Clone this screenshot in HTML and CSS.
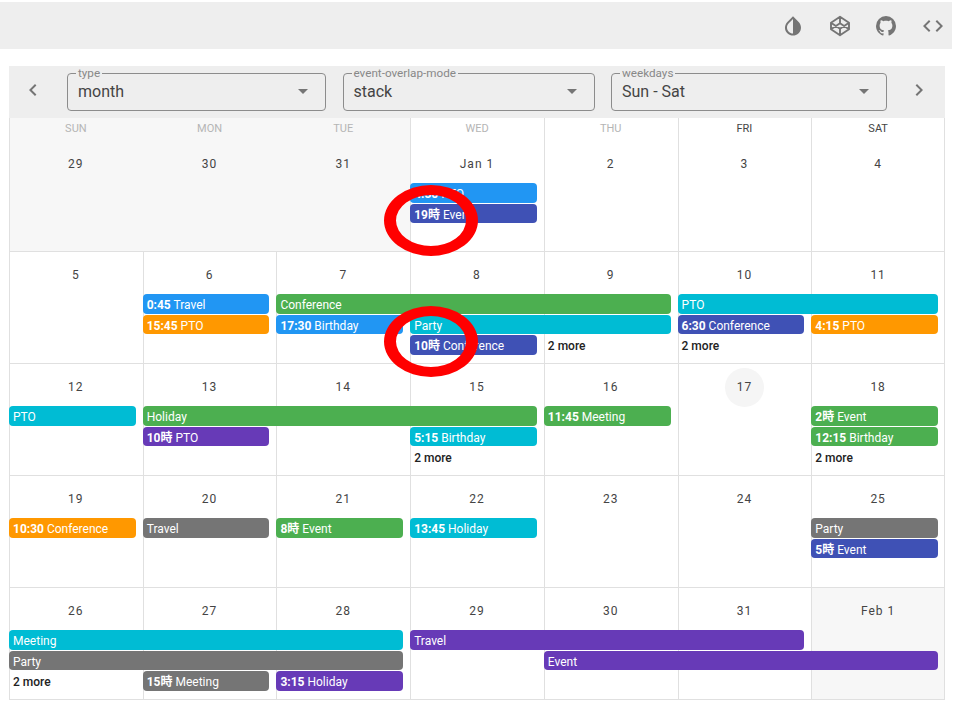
FILE: index.html
```html
<!DOCTYPE html>
<html lang="en">
<head>
<meta charset="utf-8">
<title>Calendar</title>
<link rel="stylesheet" href="styles.css">
</head>
<body>
<header class="appbar">
  <svg class="icon" viewBox="0 0 24 24"><path fill-rule="evenodd" d="M17.66 7.93L12 2.27 6.34 7.93c-3.12 3.12-3.12 8.19 0 11.31C7.9 20.8 9.95 21.58 12 21.58c2.05 0 4.1-.78 5.66-2.34 3.12-3.12 3.12-8.19 0-11.31zM12 19.59c-1.6 0-3.11-.62-4.24-1.76C6.62 16.69 6 15.19 6 13.59s.62-3.11 1.76-4.24L12 5.1v14.49z"/></svg>
  <svg class="icon stroked" viewBox="0 0 24 24"><path d="M12 2.8L21 8.8V15.2L12 21.2L3 15.2V8.8ZM3 8.8L12 14.8L21 8.8M3 15.2L12 9.2L21 15.2M12 2.8V9.2M12 14.8V21.2"/></svg>
  <svg class="icon" viewBox="0 0 24 24"><path d="M12,2A10,10 0 0,0 2,12C2,16.42 4.87,20.17 8.84,21.5C9.34,21.58 9.5,21.27 9.5,21C9.5,20.77 9.5,20.14 9.5,19.31C6.73,19.91 6.14,17.97 6.14,17.97C5.68,16.81 5.03,16.5 5.03,16.5C4.12,15.88 5.1,15.9 5.1,15.9C6.1,15.97 6.63,16.93 6.63,16.93C7.5,18.45 8.97,18 9.54,17.76C9.63,17.11 9.89,16.67 10.17,16.42C7.95,16.17 5.62,15.31 5.62,11.5C5.62,10.39 6,9.5 6.65,8.79C6.55,8.54 6.2,7.5 6.75,6.15C6.75,6.15 7.59,5.88 9.5,7.17C10.29,6.95 11.15,6.84 12,6.84C12.85,6.84 13.71,6.95 14.5,7.17C16.41,5.88 17.25,6.15 17.25,6.15C17.8,7.5 17.45,8.54 17.35,8.79C18,9.5 18.38,10.39 18.38,11.5C18.38,15.32 16.04,16.16 13.81,16.41C14.17,16.72 14.5,17.33 14.5,18.26C14.5,19.6 14.5,20.68 14.5,21C14.5,21.27 14.66,21.59 15.17,21.5C19.14,20.16 22,16.42 22,12A10,10 0 0,0 12,2Z"/></svg>
  <svg class="icon" viewBox="0 0 24 24"><path d="M14.6,16.6L19.2,12L14.6,7.4L16,6L22,12L16,18L14.6,16.6M9.4,16.6L4.8,12L9.4,7.4L8,6L2,12L8,18L9.4,16.6Z"/></svg>
</header>

<main class="main">
  <div class="toolbar">
    <div class="nav nav-prev"><svg class="icon" viewBox="0 0 24 24"><path d="M15.41,16.58L10.83,12L15.41,7.41L14,6L8,12L14,18L15.41,16.58Z"/></svg></div>
    <fieldset class="field field-type"><legend>type</legend><span>month</span><svg class="icon" viewBox="0 0 24 24"><path d="M7,10L12,15L17,10H7Z"/></svg></fieldset>
    <fieldset class="field field-mode"><legend>event-overlap-mode</legend><span>stack</span><svg class="icon" viewBox="0 0 24 24"><path d="M7,10L12,15L17,10H7Z"/></svg></fieldset>
    <fieldset class="field field-days"><legend>weekdays</legend><span>Sun - Sat</span><svg class="icon" viewBox="0 0 24 24"><path d="M7,10L12,15L17,10H7Z"/></svg></fieldset>
    <div class="nav nav-next"><svg class="icon" viewBox="0 0 24 24"><path d="M8.59,16.58L13.17,12L8.59,7.41L10,6L16,12L10,18L8.59,16.58Z"/></svg></div>
  </div>

  <section class="week week-first">
    <div class="day c1 outside"><div class="head">SUN</div><div class="num">29</div></div>
    <div class="day c2 outside"><div class="head">MON</div><div class="num">30</div></div>
    <div class="day c3 outside"><div class="head">TUE</div><div class="num">31</div></div>
    <div class="day c4"><div class="head">WED</div><div class="num">Jan 1</div></div>
    <div class="day c5"><div class="head">THU</div><div class="num">2</div></div>
    <div class="day c6"><div class="head dark">FRI</div><div class="num">3</div></div>
    <div class="day c7"><div class="head dark">SAT</div><div class="num">4</div></div>
    <div class="ev blue c4 r1"><b>4:30</b> PTO</div>
    <div class="ev indigo c4 r2"><b>19時</b> Event</div>
  </section>

  <section class="week">
    <div class="day c1"><div class="num">5</div></div>
    <div class="day c2"><div class="num">6</div></div>
    <div class="day c3"><div class="num">7</div></div>
    <div class="day c4"><div class="num">8</div></div>
    <div class="day c5"><div class="num">9</div></div>
    <div class="day c6"><div class="num">10</div></div>
    <div class="day c7"><div class="num">11</div></div>
    <div class="ev blue c2 r1"><b>0:45</b> Travel</div>
    <div class="ev green c3 r1 s3">Conference</div>
    <div class="ev cyan c6 r1 s2">PTO</div>
    <div class="ev orange c2 r2"><b>15:45</b> PTO</div>
    <div class="ev blue c3 r2"><b>17:30</b> Birthday</div>
    <div class="ev cyan c4 r2 s2">Party</div>
    <div class="ev indigo c6 r2"><b>6:30</b> Conference</div>
    <div class="ev orange c7 r2"><b>4:15</b> PTO</div>
    <div class="ev indigo c4 r3"><b>10時</b> Conference</div>
    <div class="more c5 r3">2 more</div>
    <div class="more c6 r3">2 more</div>
  </section>

  <section class="week">
    <div class="day c1"><div class="num">12</div></div>
    <div class="day c2"><div class="num">13</div></div>
    <div class="day c3"><div class="num">14</div></div>
    <div class="day c4"><div class="num">15</div></div>
    <div class="day c5"><div class="num">16</div></div>
    <div class="day c6"><div class="num today">17</div></div>
    <div class="day c7"><div class="num">18</div></div>
    <div class="ev cyan c1 r1">PTO</div>
    <div class="ev green c2 r1 s3">Holiday</div>
    <div class="ev green c5 r1"><b>11:45</b> Meeting</div>
    <div class="ev green c7 r1"><b>2時</b> Event</div>
    <div class="ev purple c2 r2"><b>10時</b> PTO</div>
    <div class="ev cyan c4 r2"><b>5:15</b> Birthday</div>
    <div class="ev green c7 r2"><b>12:15</b> Birthday</div>
    <div class="more c4 r3">2 more</div>
    <div class="more c7 r3">2 more</div>
  </section>

  <section class="week">
    <div class="day c1"><div class="num">19</div></div>
    <div class="day c2"><div class="num">20</div></div>
    <div class="day c3"><div class="num">21</div></div>
    <div class="day c4"><div class="num">22</div></div>
    <div class="day c5"><div class="num">23</div></div>
    <div class="day c6"><div class="num">24</div></div>
    <div class="day c7"><div class="num">25</div></div>
    <div class="ev orange c1 r1"><b>10:30</b> Conference</div>
    <div class="ev grey c2 r1">Travel</div>
    <div class="ev green c3 r1"><b>8時</b> Event</div>
    <div class="ev cyan c4 r1"><b>13:45</b> Holiday</div>
    <div class="ev grey c7 r1">Party</div>
    <div class="ev indigo c7 r2"><b>5時</b> Event</div>
  </section>

  <section class="week week-last">
    <div class="day c1"><div class="num">26</div></div>
    <div class="day c2"><div class="num">27</div></div>
    <div class="day c3"><div class="num">28</div></div>
    <div class="day c4"><div class="num">29</div></div>
    <div class="day c5"><div class="num">30</div></div>
    <div class="day c6"><div class="num">31</div></div>
    <div class="day c7 outside"><div class="num">Feb 1</div></div>
    <div class="ev cyan c1 r1 s3">Meeting</div>
    <div class="ev purple c4 r1 s3">Travel</div>
    <div class="ev grey c1 r2 s3">Party</div>
    <div class="ev purple c5 r2 s3">Event</div>
    <div class="more c1 r3">2 more</div>
    <div class="ev grey c2 r3"><b>15時</b> Meeting</div>
    <div class="ev purple c3 r3"><b>3:15</b> Holiday</div>
  </section>

  <div class="ring ring-a"></div>
  <div class="ring ring-b"></div>
</main>
</body>
</html>
```

FILE: styles.css
```css
* { box-sizing: border-box; }

body {
  margin: 0;
  background: #fff;
  font-family: Roboto, "Noto Sans CJK JP", sans-serif;
  color: #333;
}

.icon {
  width: 24px;
  height: 24px;
  fill: #757575;
  flex: none;
}

.stroked {
  fill: none;
  stroke: #757575;
  stroke-width: 1.9;
  stroke-linejoin: round;
}

.appbar {
  display: flex;
  align-items: center;
  justify-content: flex-end;
  gap: 22.6px;
  width: 952px;
  height: 47px;
  margin-top: 2px;
  padding-right: 7px;
  background: #eee;
}

.main {
  position: relative;
  width: 936px;
  margin: 17px 0 0 9px;
}

.toolbar {
  display: flex;
  gap: 16.5px;
  height: 52px;
  padding-top: 1px;
  background: #eee;
}

.nav {
  width: 58px;
  height: 46px;
  display: flex;
  align-items: center;
}

.nav-prev {
  margin-right: -16.5px;
  padding-left: 12px;
}

.nav-next {
  margin-left: -16.5px;
  justify-content: flex-end;
  padding-right: 14px;
}

.field {
  display: flex;
  align-items: center;
  justify-content: space-between;
  height: 44px;
  margin: 0;
  padding: 0 10px 7px 10px;
  border: 1px solid #8c8c8c;
  border-radius: 4px;
  min-width: 0;
  font-size: 16px;
  color: #444;
}

.field legend {
  padding: 0 2px;
  margin-left: -2px;
  font-size: 11.7px;
  line-height: 12px;
  color: #888;
}

.field-type { width: 259px; }
.field-mode { width: 252px; }
.field-days { width: 276px; }

.week {
  display: grid;
  grid-template-columns: repeat(7, 1fr);
  grid-template-rows: 43px 20.6px 20.6px 20.6px 1fr;
  height: 112px;
}

.week-first {
  grid-template-rows: 65px 20.6px 20.6px 20.6px 1fr;
  height: 133px;
}

.week-last { height: 113px; }

.c1 { grid-column-start: 1; }
.c2 { grid-column-start: 2; }
.c3 { grid-column-start: 3; }
.c4 { grid-column-start: 4; }
.c5 { grid-column-start: 5; }
.c6 { grid-column-start: 6; }
.c7 { grid-column-start: 7; }

.s2 { grid-column-end: span 2; }
.s3 { grid-column-end: span 3; }

.r1 { grid-row-start: 2; }
.r2 { grid-row-start: 3; }
.r3 { grid-row-start: 4; }

.day {
  grid-row: 1 / -1;
  display: flex;
  flex-direction: column;
  align-items: center;
  padding: 4px 1px 0 0;
  border-left: 1px solid #e0e0e0;
  border-top: 1px solid #e0e0e0;
}

.day.c7 {
  padding-right: 0;
  border-right: 1px solid #e0e0e0;
}

.week-first .day {
  border-top: 0;
  padding-top: 6px;
}

.week-last .day { border-bottom: 1px solid #e0e0e0; }

.outside {
  background: #f7f7f7;
}

.week-first .c2.outside,
.week-first .c3.outside {
  border-left-color: #f7f7f7;
}

.head {
  height: 21px;
  font-size: 11px;
  line-height: 10px;
  color: #b5b5b5;
}

.head.dark { color: #444; }

.num {
  width: 39px;
  height: 39px;
  line-height: 39px;
  border-radius: 50%;
  text-align: center;
  white-space: nowrap;
  font-size: 12px;
  letter-spacing: 1px;
  color: #444;
}

.today { background: #f5f5f5; }

.ev {
  z-index: 1;
  height: 19.6px;
  margin-right: 7px;
  padding-left: 4px;
  border-radius: 4px;
  font-size: 12px;
  line-height: 22px;
  color: #fff;
  white-space: nowrap;
  overflow: hidden;
}

.ev b { font-weight: 700; }

.more {
  z-index: 1;
  padding-left: 4px;
  font-size: 12px;
  font-weight: 500;
  line-height: 22px;
  color: #222;
}

.blue { background: #2196f3; }
.indigo { background: #3f51b5; }
.green { background: #4caf50; }
.cyan { background: #00bcd4; }
.orange { background: #ff9800; }
.grey { background: #757575; }
.purple { background: #673ab7; }

.ring {
  position: absolute;
  left: 375px;
  width: 94px;
  height: 71px;
  z-index: 2;
  border-style: solid;
  border-color: #f00;
  border-width: 10px 12px;
  border-radius: 50%;
}

.ring-a { top: 119px; }
.ring-b { top: 240px; }
```
